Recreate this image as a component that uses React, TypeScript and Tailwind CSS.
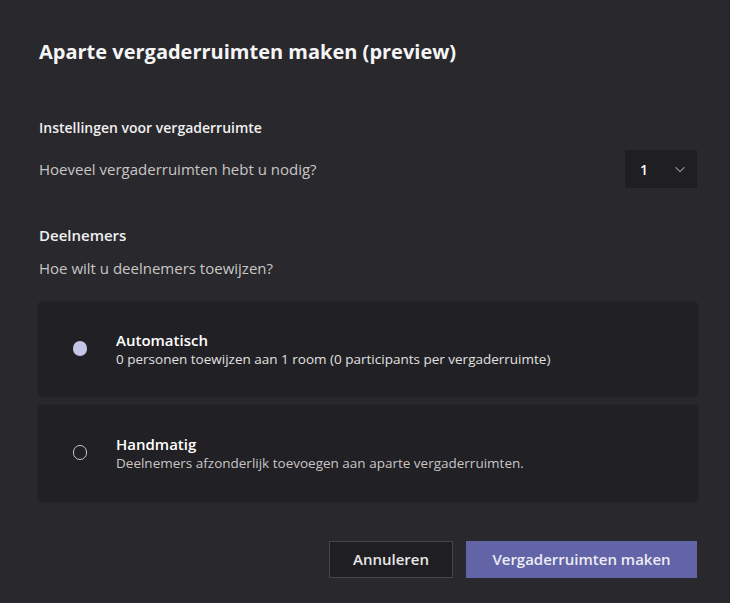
export default function App() {
    return (
        <div
            className="w-[730px] h-[603px] bg-[#29282d] text-white flex flex-col pl-[39px] pr-[33px] pt-[38px]"
            style={{ fontFamily: '"Open Sans", "Noto Sans", sans-serif' }}
        >
            <h1 className="text-[20px] font-bold leading-[28px] text-[#f5f5f5]">
                Aparte vergaderruimten maken (preview)
            </h1>

            <h2 className="mt-[52px] text-[14px] font-semibold leading-[20px] text-[#f0f0f0]">
                Instellingen voor vergaderruimte
            </h2>
            <div className="mt-[12px] flex items-center justify-between">
                <span className="text-[15px] text-[#c8c6c4]">
                    Hoeveel vergaderruimten hebt u nodig?
                </span>
                <div className="w-[72px] h-[38px] bg-[#1f1e22] flex items-center justify-between pl-[15px] pr-[10px]">
                    <span className="text-[14px] font-semibold">1</span>
                    <svg width="14" height="14" viewBox="0 0 16 16" fill="none">
                        <path
                            d="M3 6l5 5 5-5"
                            stroke="#8a8886"
                            strokeWidth="1.3"
                        />
                    </svg>
                </div>
            </div>

            <h2 className="mt-[37px] text-[15px] font-semibold leading-[20px] text-[#f0f0f0]">
                Deelnemers
            </h2>
            <p className="mt-[13px] text-[15px] text-[#c8c6c4] leading-[20px]">
                Hoe wilt u deelnemers toewijzen?
            </p>

            <div className="mt-[24px] flex flex-col gap-[10px]">
                <div className="h-[93px] bg-[#212024] rounded-[3px] shadow-[0_1px_3px_rgba(0,0,0,0.4)] flex items-center pl-[34px]">
                    <div className="w-[14px] h-[15px] rounded-full bg-[#c5c5e8]" />
                    <div className="ml-[29px] flex flex-col">
                        <span className="text-[15px] font-semibold leading-[20px]">
                            Automatisch
                        </span>
                        <span className="text-[13.5px] text-[#e0e0e0] leading-[18px]">
                            0 personen toewijzen aan 1 room (0 participants per
                            vergaderruimte)
                        </span>
                    </div>
                </div>
                <div className="h-[95px] bg-[#212024] rounded-[3px] shadow-[0_1px_3px_rgba(0,0,0,0.4)] flex items-center pl-[34px]">
                    <div className="w-[14px] h-[15px] rounded-full border-[1.5px] border-[#c8c6c4]" />
                    <div className="ml-[29px] flex flex-col">
                        <span className="text-[15px] font-semibold leading-[20px]">
                            Handmatig
                        </span>
                        <span className="text-[13.5px] text-[#c8c6c4] leading-[18px]">
                            Deelnemers afzonderlijk toevoegen aan aparte
                            vergaderruimten.
                        </span>
                    </div>
                </div>
            </div>

            <div className="mt-[41px] flex justify-end gap-[13px]">
                <button className="w-[124px] h-[37px] border border-[#46454b] bg-[#1f1e22] text-[15px] font-semibold text-[#e8e8e8]">
                    Annuleren
                </button>
                <button className="w-[231px] h-[37px] bg-[#6264a7] text-[15px] font-semibold text-[#ececf5]">
                    Vergaderruimten maken
                </button>
            </div>
        </div>
    );
}
